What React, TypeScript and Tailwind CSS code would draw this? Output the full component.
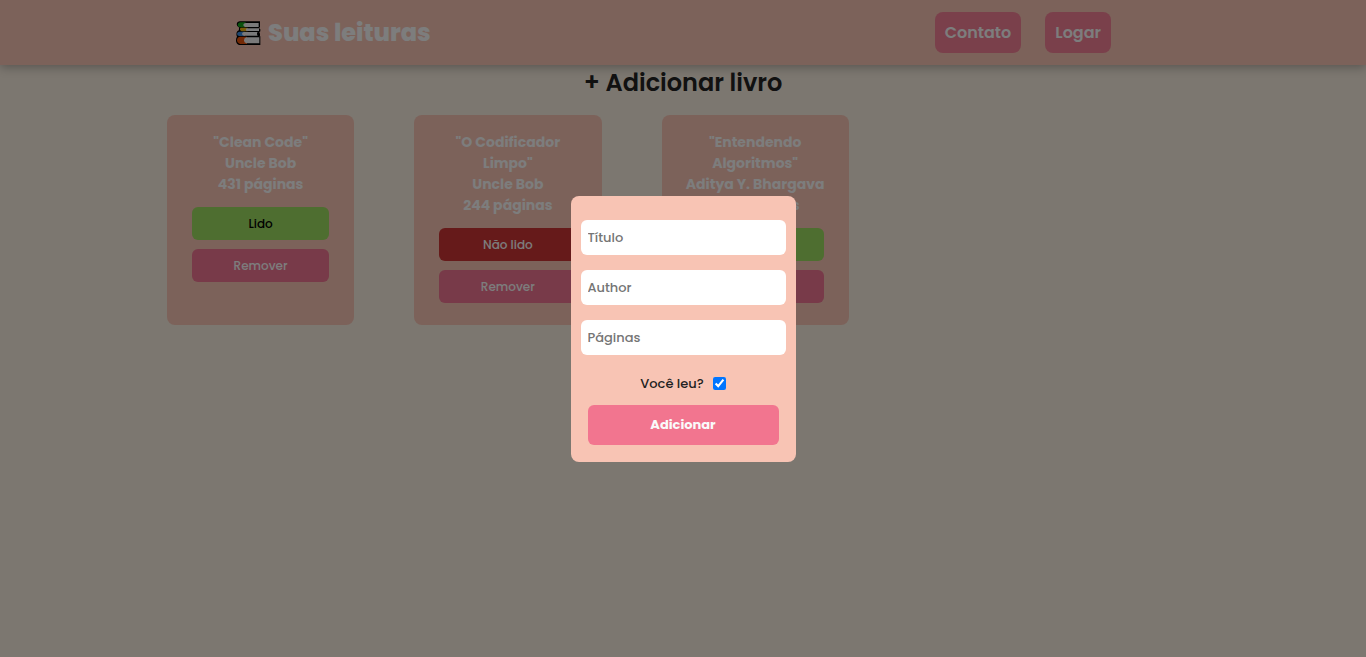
import { useState } from "react";

type Book = { title: string; author: string; pages: number; read: boolean };

const initialBooks: Book[] = [
  { title: "Clean Code", author: "Uncle Bob", pages: 431, read: true },
  { title: "O Codificador Limpo", author: "Uncle Bob", pages: 244, read: false },
  { title: "Entendendo Algoritmos", author: "Aditya Y. Bhargava", pages: 264, read: true },
];

function BooksLogo() {
  return (
    <svg viewBox="0 2 78 78" className="h-[26px] w-[26px]" aria-hidden="true">
      <path d="M14 6H75V23L72 26L76 30V36L73 39L75 43V49L72 51H76V77H12Q3 74 3 63Q3 56 6 52Q2 43 7 36Q10 33 12 33Q11 28 13 25Q5 22 5 14Q6 7 14 6Z" fill="#000" />
      <path d="M15 9H32V24H15Q8 22 8 16Q9 10 15 9Z" fill="#16a51b" />
      <path d="M32 11H71V23H30Q24 21 25 16Q26 12 32 11Z" fill="#f4f4f4" />
      <path d="M17 25H38V36H20Q15 34 15 30Q15 26 17 25Z" fill="#f2b60f" />
      <path d="M35 27H72V35H35Q30 31 35 27Z" fill="#f4f4f4" />
      <path d="M12 37H30V50H12Q6 48 6 43Q7 38 12 37Z" fill="#3d8fe0" />
      <path d="M27 38H68Q64 43 68 49H27Q21 47 21 43Q22 39 27 38Z" fill="#f4f4f4" />
      <path d="M14 52H36V74H15Q6 71 6 63Q6 54 14 52Z" fill="#e8540c" />
      <path d="M34 54H73V72H34Q27 70 27 63Q27 56 34 54Z" fill="#f4f4f4" />
    </svg>
  );
}

function BookCard({ book, onToggle, onRemove }: { book: Book; onToggle: () => void; onRemove: () => void }) {
  return (
    <article className="rounded-lg bg-[#f8c4b4] px-[25px] pt-[17px] pb-[22px] text-center">
      <div className="-mx-2 text-[14px] leading-[21px] font-bold text-[#fafafa]">
        <h2 className="px-4">{`"${book.title}"`}</h2>
        <p>{book.author}</p>
        <p>{`${book.pages} páginas`}</p>
      </div>
      <div className="mt-3 flex flex-col gap-[9px] text-[12px] font-medium">
        <button
          type="button"
          onClick={onToggle}
          className={book.read ? "h-[33px] rounded-md bg-[#9cdc60] text-black" : "h-[33px] rounded-md bg-[#cc3434] text-[#fafafa]"}
        >
          {book.read ? "Lido" : "Não lido"}
        </button>
        <button type="button" onClick={onRemove} className="h-[33px] rounded-md bg-[#f07492] text-[#fafafa]">
          Remover
        </button>
      </div>
    </article>
  );
}

const field = "h-[35px] w-full rounded-md bg-white px-[7px] pt-0.5 text-[13px] font-medium text-black outline-none placeholder:text-[#757575]";

export default function App() {
  const [books, setBooks] = useState(initialBooks);
  const [open, setOpen] = useState(true);
  const [read, setRead] = useState(true);

  return (
    <div className="min-h-screen bg-[#f8eee0] font-['Poppins','Inter',sans-serif]">
      <header className="flex h-[65px] items-center justify-between bg-[#f8c4b4] pr-[255px] pl-[235px] text-[#fafafa] shadow-[0_2px_10px_rgba(0,0,0,0.3)]">
        <h1 className="flex items-center gap-[7px] text-2xl font-extrabold">
          <BooksLogo />
          Suas leituras
        </h1>
        <nav className="flex gap-6 text-[16px] font-semibold">
          <a href="#contato" className="flex h-[41px] items-center rounded-lg bg-[#f48096] px-[10px]">Contato</a>
          <a href="#logar" className="flex h-[41px] items-center rounded-lg bg-[#f48096] px-[10px]">Logar</a>
        </nav>
      </header>
      <main>
        <div className="flex justify-center">
          <button type="button" onClick={() => setOpen(true)} className="h-[35px] text-2xl font-semibold text-[#222]">
            + Adicionar livro
          </button>
        </div>
        <section className="mt-[15px] ml-[167px] grid max-w-[929px] grid-cols-4 gap-[60px]">
          {books.map((book, i) => (
            <BookCard
              key={book.title}
              book={book}
              onToggle={() => setBooks(books.map((b, j) => (j === i ? { ...b, read: !b.read } : b)))}
              onRemove={() => setBooks(books.filter((_, j) => j !== i))}
            />
          ))}
        </section>
      </main>
      {open && (
        <div className="fixed inset-0 flex items-center justify-center bg-black/50" onClick={() => setOpen(false)}>
          <form
            onClick={(e) => e.stopPropagation()}
            onSubmit={(e) => e.preventDefault()}
            className="flex w-[225px] flex-col gap-[15px] rounded-lg bg-[#f8c4b4] px-[10px] pt-6 pb-[17px]"
          >
            <input aria-label="Título" placeholder="Título" className={field} />
            <input aria-label="Author" placeholder="Author" className={field} />
            <input aria-label="Páginas" placeholder="Páginas" className={field} />
            <div className="flex h-5 items-center justify-center gap-[9px] pt-2 text-[13px] font-medium text-[#222]">
              <label htmlFor="read">Você leu?</label>
              <input id="read" type="checkbox" checked={read} onChange={(e) => setRead(e.target.checked)} className="h-[13px] w-[13px]" />
            </div>
            <button type="submit" className="mx-[7px] h-10 rounded-md bg-[#f2758f] text-[13px] font-bold text-[#fafafa]">
              Adicionar
            </button>
          </form>
        </div>
      )}
    </div>
  );
}
